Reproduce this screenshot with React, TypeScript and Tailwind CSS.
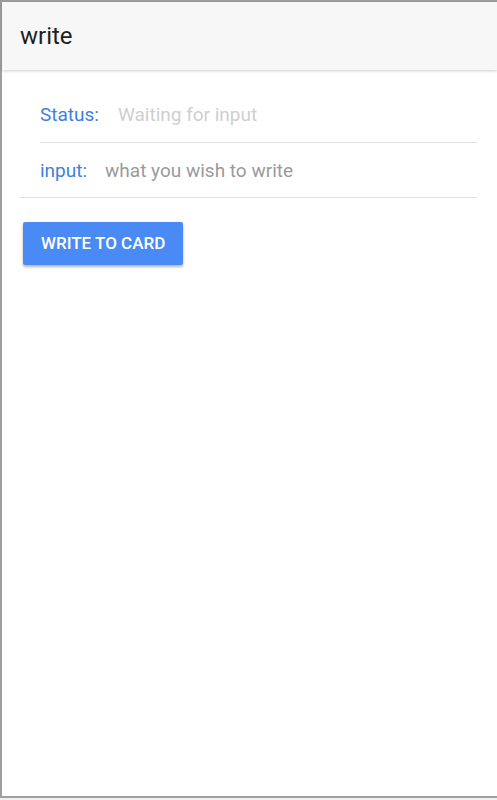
export default function App() {
  return (
    <div className="h-[800px] w-[497px] bg-[#f0f0f0] font-['Roboto',sans-serif]">
      <div className="flex h-[798px] flex-col border-b-2 border-l-2 border-t-2 border-[#9e9e9e] bg-white">
        <header className="flex h-[68px] items-center bg-[#f7f7f7] px-[18px] shadow-[0_1px_3px_rgba(0,0,0,0.2)]">
          <h1 className="text-[24px] text-[#1f1f1f]">write</h1>
        </header>
        <div className="pl-[18px] pr-[20px] pt-[17px]">
          <div className="ml-[20px] flex h-[56px] items-center border-b border-[#e0e0e0] pt-[2px] text-[19px]">
            <span className="text-[#3f7fe0]">Status:</span>
            <span className="ml-[19px] text-[#cfcfcf]">Waiting for input</span>
          </div>
          <div className="flex h-[55px] items-center border-b border-[#e0e0e0] pt-[2px] text-[19px]">
            <span className="pl-[20px] text-[#3f7fe0]">input:</span>
            <input
              className="ml-[18px] flex-1 bg-transparent text-[#444] outline-none placeholder:text-[#9a9a9a]"
              placeholder="what you wish to write"
            />
          </div>
          <button className="ml-[3px] mt-[24px] h-[43px] rounded-[2px] bg-[#4a8af4] px-[18px] text-[17px] font-medium uppercase text-white shadow-[0_2px_3px_rgba(0,0,0,0.3)]">
            Write to card
          </button>
        </div>
      </div>
    </div>
  );
}
